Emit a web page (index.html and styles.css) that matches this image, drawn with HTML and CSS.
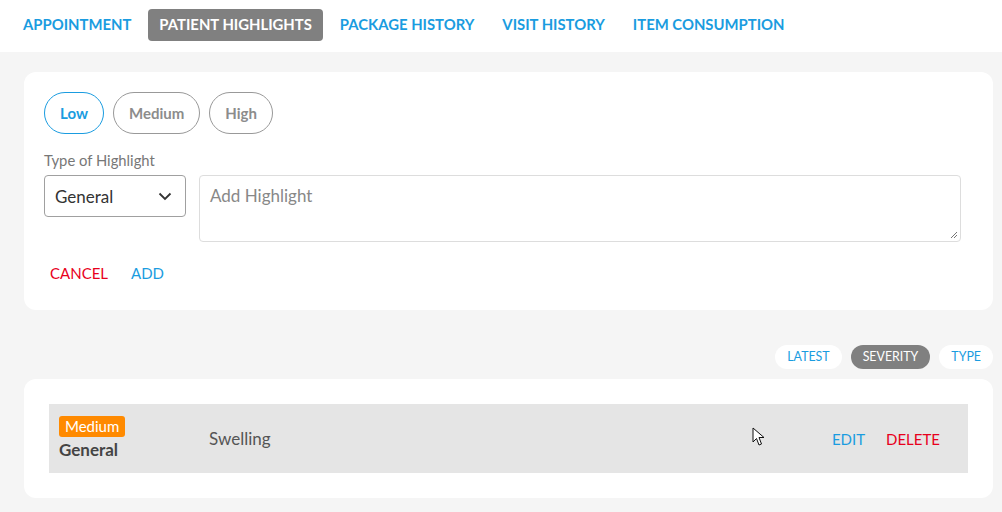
FILE: index.html
```html
<!DOCTYPE html>
<html>
<head>
<meta charset="utf-8">
<link rel="stylesheet" href="styles.css">
</head>
<body>
<nav class="tabs">
  <a class="tab">APPOINTMENT</a>
  <a class="tab active">PATIENT HIGHLIGHTS</a>
  <a class="tab">PACKAGE HISTORY</a>
  <a class="tab">VISIT HISTORY</a>
  <a class="tab">ITEM CONSUMPTION</a>
</nav>
<main class="content">
  <section class="card form-card">
    <div class="levels">
      <button class="level selected">Low</button>
      <button class="level">Medium</button>
      <button class="level">High</button>
    </div>
    <label class="field-label">Type of Highlight</label>
    <div class="inputs">
      <div class="select">
        <span>General</span>
        <svg width="14" height="9" viewBox="0 0 14 9"><path d="M1.5 1.5 L7 7 L12.5 1.5" fill="none" stroke="#333" stroke-width="1.8"/></svg>
      </div>
      <div class="textarea">
        <span class="placeholder">Add Highlight</span>
        <svg class="grip" width="8" height="8" viewBox="0 0 8 8"><path d="M7 1 L1 7 M7 4 L4 7" stroke="#777" stroke-width="1"/></svg>
      </div>
    </div>
    <div class="actions">
      <a class="btn-text red">CANCEL</a>
      <a class="btn-text blue">ADD</a>
    </div>
  </section>
  <div class="sort">
    <span class="sort-pill">LATEST</span>
    <span class="sort-pill active">SEVERITY</span>
    <span class="sort-pill">TYPE</span>
  </div>
  <section class="card list-card">
    <div class="row">
      <div class="row-type">
        <span class="badge">Medium</span>
        <span class="type-name">General</span>
      </div>
      <div class="row-text">Swelling</div>
      <div class="row-actions">
        <a class="btn-text blue">EDIT</a>
        <a class="btn-text red">DELETE</a>
      </div>
      <svg class="cursor" width="14" height="20" viewBox="0 0 14 20"><path d="M1 1 L1 15 L4.5 11.5 L7 18 L9.5 17 L7 10.5 L12 10.5 Z" fill="#fff" stroke="#111" stroke-width="1"/></svg>
    </div>
  </section>
</main>
</body>
</html>
```
FILE: styles.css
```css
* { box-sizing: border-box; }
html, body { margin: 0; padding: 0; }
body {
  background: #f5f5f5;
  font-family: Lato, "Open Sans", sans-serif;
  width: 1002px;
  height: 512px;
  overflow: hidden;
}
.tabs {
  background: #fff;
  height: 52px;
  display: flex;
  align-items: flex-start;
  gap: 6px;
  padding: 9px 0 0 12px;
}
.tab {
  font-size: 14.85px;
  font-weight: 700;
  color: #1a9ce0;
  height: 32px;
  line-height: 30px;
  padding: 0 11px;
  border-radius: 4px;
}
.tab.active { background: #808080; color: #fff; }
.content { padding: 20px 9px 0 24px; }
.card { background: #fff; border-radius: 12px; }
.form-card { padding: 20px 20px 0 20px; height: 238px; }
.levels { display: flex; gap: 9px; }
.level {
  font-family: inherit;
  font-size: 15px;
  font-weight: 700;
  height: 42px;
  padding: 0 15px;
  border-radius: 21px;
  background: #fff;
  border: 1px solid #999;
  color: #8c8c8c;
}
.level.selected { border-color: #1a9ce0; color: #1a9ce0; }
.field-label {
  display: block;
  margin-top: 17px;
  font-size: 14.8px;
  color: #777;
  line-height: 18px;
}
.inputs { display: flex; gap: 13px; margin-top: 6px; }
.select {
  width: 142px;
  height: 42px;
  border: 1px solid #a0a0a0;
  border-radius: 4px;
  display: flex;
  align-items: center;
  justify-content: space-between;
  padding: 0 13px 0 10px;
  font-size: 17px;
  color: #333;
}
.textarea {
  position: relative;
  width: 762px;
  height: 67px;
  border: 1px solid #ddd;
  border-radius: 4px;
  padding: 9px 10px;
  font-size: 17px;
}
.placeholder { color: #888; }
.grip { position: absolute; right: 2px; bottom: 2px; }
.actions { display: flex; gap: 23px; margin-top: 22px; padding-left: 6px; }
.btn-text { font-size: 15px; line-height: 18px; }
.red { color: #e8001c; }
.blue { color: #1a9ce0; }
.sort {
  display: flex;
  justify-content: flex-end;
  gap: 9px;
  margin-top: 35px;
  height: 24px;
}
.sort-pill {
  font-size: 12.4px;
  line-height: 24px;
  height: 24px;
  padding: 0 12px;
  border-radius: 12px;
  background: #fff;
  color: #1a9ce0;
}
.sort-pill.active { background: #808080; color: #fff; }
.list-card { margin-top: 10px; padding: 25px 25px 25px 25px; height: 119px; }
.row {
  position: relative;
  background: #e5e5e5;
  height: 69px;
  display: flex;
  align-items: center;
  padding: 0 28px 0 10px;
}
.row-type { display: flex; flex-direction: column; align-items: flex-start; width: 150px; padding-top: 1px; }
.badge {
  background: #ff8a00;
  color: #fff;
  font-size: 15px;
  line-height: 21px;
  padding: 0 6px;
  border-radius: 3px;
}
.type-name { font-size: 17px; font-weight: 700; color: #444; line-height: 26px; }
.row-text { flex: 1; font-size: 17px; color: #555; }
.row-actions { display: flex; gap: 21px; }
.cursor { position: absolute; left: 703px; top: 23px; }
```
